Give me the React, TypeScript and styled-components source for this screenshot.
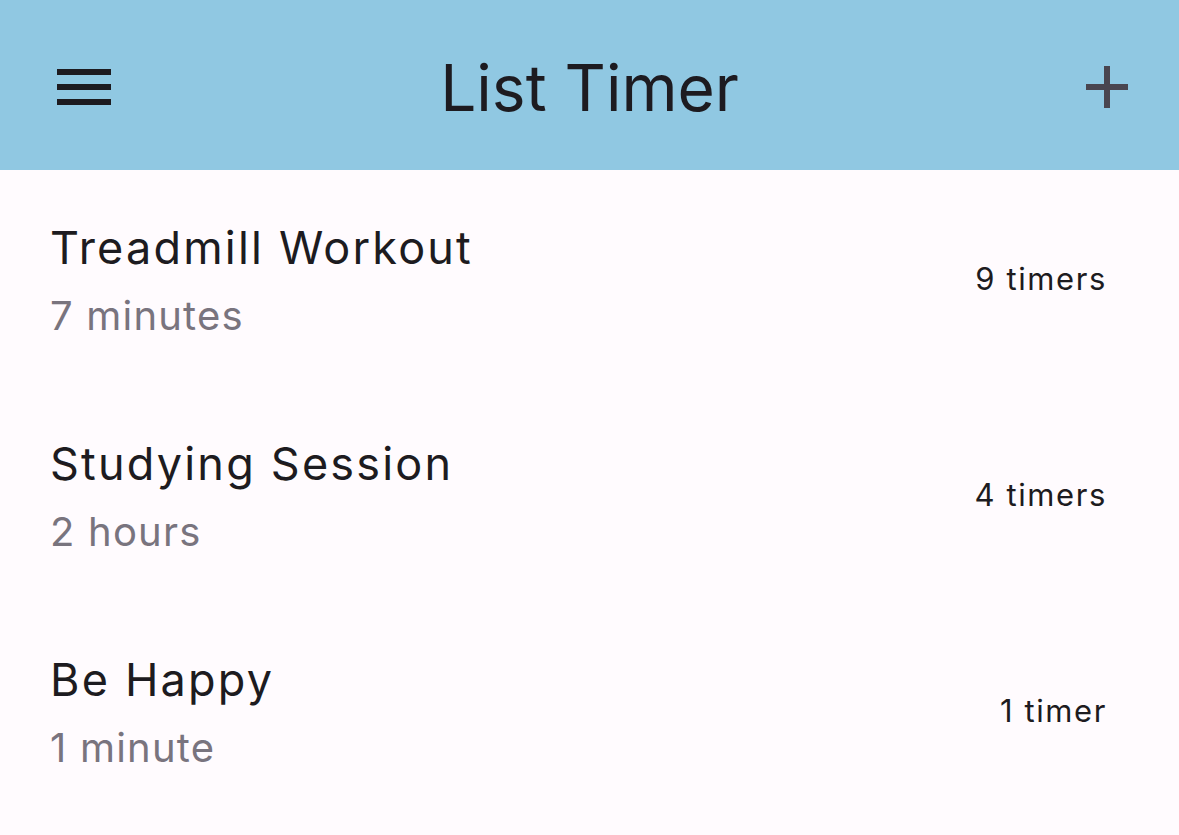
import React from 'react';
import styled, { createGlobalStyle } from 'styled-components';

interface TimerList {
  name: string;
  duration: string;
  count: string;
}

const lists: TimerList[] = [
  { name: 'Treadmill Workout', duration: '7 minutes', count: '9 timers' },
  { name: 'Studying Session', duration: '2 hours', count: '4 timers' },
  { name: 'Be Happy', duration: '1 minute', count: '1 timer' },
];

const GlobalStyle = createGlobalStyle`
  html, body {
    margin: 0;
    padding: 0;
    background: #fffbfe;
    font-family: Inter, Roboto, "Noto Sans", sans-serif;
  }
`;

const Page = styled.div`
  width: 1179px;
  height: 835px;
  background: #fffbfe;
  overflow: hidden;
`;

const AppBar = styled.header`
  height: 170px;
  box-sizing: border-box;
  padding-top: 4px;
  background: #90c8e2;
  display: grid;
  grid-template-columns: 168px 1fr 168px;
  align-items: center;
`;

const IconButton = styled.button<{ $color: string; $align: string }>`
  width: 144px;
  height: 144px;
  padding: 0;
  border: none;
  background: transparent;
  display: flex;
  align-items: center;
  justify-content: center;
  justify-self: ${(p) => p.$align};
  color: ${(p) => p.$color};
`;

const Title = styled.h1`
  margin: 0;
  text-align: center;
  font-size: 64px;
  font-weight: 400;
  color: #1d1b20;
  letter-spacing: 0;
`;

const List = styled.ul`
  list-style: none;
  margin: 0;
  padding: 0;
`;

const Row = styled.li`
  height: 216px;
  box-sizing: border-box;
  padding: 0 72px 0 50px;
  display: flex;
  align-items: center;
  justify-content: space-between;
`;

const Texts = styled.div`
  display: flex;
  flex-direction: column;
  gap: 12px;
  padding-top: 5px;
`;

const Name = styled.span`
  font-size: 45px;
  line-height: 58px;
  color: #1d1b20;
  letter-spacing: 2.2px;
`;

const Duration = styled.span`
  font-size: 40px;
  line-height: 54px;
  color: #79747e;
  letter-spacing: 1.2px;
`;

const Count = styled.span`
  font-size: 31px;
  color: #1d1b20;
  letter-spacing: 1.6px;
`;

const MenuIcon = () => (
  <svg width="54" height="36" viewBox="0 0 54 36">
    <rect x="0" y="0" width="54" height="6" fill="currentColor" />
    <rect x="0" y="15" width="54" height="6" fill="currentColor" />
    <rect x="0" y="30" width="54" height="6" fill="currentColor" />
  </svg>
);

const AddIcon = () => (
  <svg width="42" height="42" viewBox="0 0 42 42">
    <rect x="18" y="0" width="6" height="42" fill="currentColor" />
    <rect x="0" y="18" width="42" height="6" fill="currentColor" />
  </svg>
);

const App: React.FC = () => {
  return (
    <Page>
      <GlobalStyle />
      <AppBar>
        <IconButton $color="#1d1b20" $align="center">
          <MenuIcon />
        </IconButton>
        <Title>List Timer</Title>
        <IconButton $color="#49454f" $align="end">
          <AddIcon />
        </IconButton>
      </AppBar>
      <List>
        {lists.map((item) => (
          <Row key={item.name}>
            <Texts>
              <Name>{item.name}</Name>
              <Duration>{item.duration}</Duration>
            </Texts>
            <Count>{item.count}</Count>
          </Row>
        ))}
      </List>
    </Page>
  );
};

export default App;
